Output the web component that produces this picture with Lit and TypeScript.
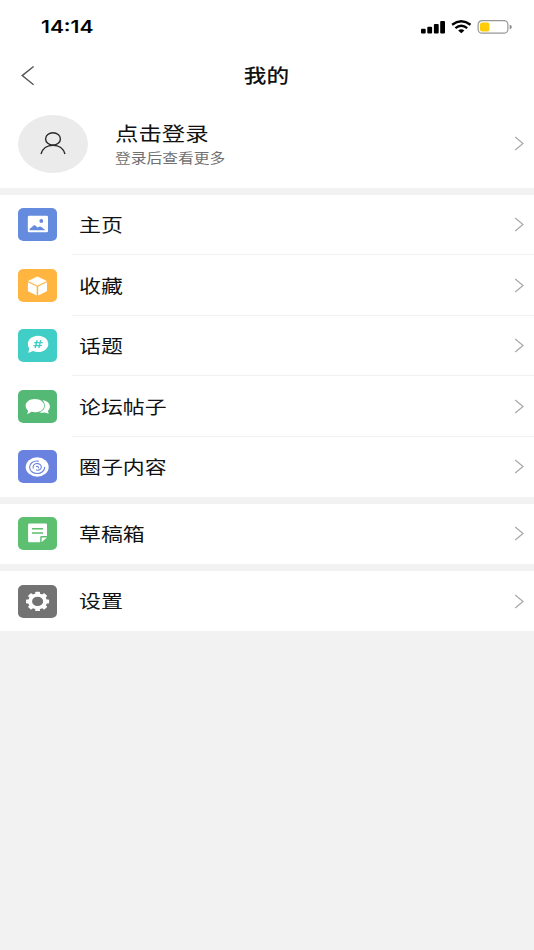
import { LitElement, html, svg, css, type SVGTemplateResult } from "lit";
import { customElement, property } from "lit/decorators.js";

const spokes = [0, 45, 90, 135, 180, 225, 270, 315];

const glyphs: Record<string, SVGTemplateResult> = {
  picture: svg`
    <rect x="9.8" y="7.7" width="20.2" height="16.5" rx="1.3" fill="#fff"/>
    <circle cx="23.3" cy="13" r="1.9" fill="#658bdf"/>
    <path d="M11.6 22.2V21L15.7 17.4Q16.4 16.8 17.2 17.5L19.7 19.5L21.6 18.5Q22.4 18.2 23.1 18.8L27.4 22.2Z" fill="#658bdf"/>`,
  cube: svg`
    <path d="M19.4 7.8L28.3 12L19.4 16.3L10.6 12Z" fill="#fff" stroke="#fff" stroke-width=".6" stroke-linejoin="round"/>
    <path d="M9.9 13.2L18.7 17.5V26.6L10.5 22.6Q9.9 22.3 9.9 21.6Z M29 13.2L20.2 17.5V26.6L28.4 22.6Q29 22.3 29 21.6Z" fill="#fff"/>`,
  topic: svg`
    <path d="M20.1 6.8C25.8 6.8 30.3 10.4 30.3 14.9S25.8 23 20.1 23C18.2 23 16.5 22.7 15 22C13.5 22.9 11.8 23.5 10 23.5C10.9 22.3 11.2 20.8 11 19.1C10.2 17.8 9.9 16.4 9.9 14.9C9.9 10.4 14.4 6.8 20.1 6.8Z" fill="#fff"/>
    <path d="M19.2 11.2L17.2 19M22.8 11.2L20.8 19M16.2 13.6H24.7M15.4 16.6H23.9" stroke="#40cec7" stroke-width="1.4" fill="none"/>`,
  comments: svg`
    <path d="M24.5 10.2C28.8 10.4 31.9 13 31.9 16.4C31.9 18.1 31.2 19.6 30 20.7Q30 22.5 31.1 23.6Q28.8 23.5 27 22.6C25.1 23 23 22.9 21.3 22.3C25 21.2 26.8 18.8 26.8 15.9C26.8 13.7 26 11.6 24.5 10.2Z" fill="#fff"/>
    <path d="M16.9 9.1C22.2 9.1 26.2 12 26.2 15.7S22.2 22.3 16.9 22.3C15.7 22.3 14.4 22.1 13.3 21.8Q11.2 23.6 8.9 24Q10.2 22.3 10 20.4C8.4 19.2 7.6 17.6 7.6 15.7C7.6 12 11.6 9.1 16.9 9.1Z" fill="#fff"/>`,
  spiral: svg`
    <ellipse cx="19.2" cy="17" rx="11.5" ry="9.7" fill="#fff"/>
    <path d="M20.3 11.1C15.4 10.5 11.5 13.3 11.6 17.2C11.7 21 15 23.5 19.2 23.5C23.4 23.5 26.5 20.9 26.7 17.4M15.2 18.2C14.5 15.2 16.9 13.2 19.9 13.6C22.8 14 24.1 16.4 22.9 18.5C22 20 20.2 20.5 18.6 19.9M18.4 16.5Q20.5 16 20.6 17.9" stroke="#6a82df" stroke-width="1.1" stroke-linecap="round" fill="none"/>`,
  note: svg`
    <path d="M11.4 6.4H27.7Q29 6.4 29 7.6V19H23.5Q22.2 19 22.2 20.2V25.3H11.4Q10.1 25.3 10.1 24.1V7.6Q10.1 6.4 11.4 6.4Z M23.6 20.4H29L23.6 25.2Z" fill="#fff"/>
    <path d="M14 11.7H25.1M14 16H25.1" stroke="#5dbf70" stroke-width="1.4"/>`,
  gear: svg`
    <g transform="translate(19.6 16.4) scale(1.19 1)">
      ${spokes.map((a) => svg`<rect x="-2" y="-9.7" width="4" height="4.5" rx=".7" fill="#fff" transform="rotate(${a})"/>`)}
      <circle r="6.3" fill="none" stroke="#fff" stroke-width="3.3"/>
    </g>`,
};

@customElement("menu-chevron")
class MenuChevron extends LitElement {
  static styles = css`
    :host { display: block; width: 10px; height: 15px; margin-right: 10px; flex: none; }
    svg { display: block; }
    path { fill: none; stroke: #a9a9a9; stroke-width: 1.25; }
  `;
  render() {
    return html`<svg width="10" height="15" viewBox="0 0 10 15"><path d="M1.2 1L9 7.5L1.2 14"/></svg>`;
  }
}

@customElement("menu-row")
class MenuRow extends LitElement {
  @property() icon = "";
  @property() label = "";
  @property() color = "";
  static styles = css`
    :host { display: flex; align-items: center; height: 60.5px; padding-left: 18px; background: #fff; box-sizing: border-box; }
    .tile { display: block; width: 39px; height: 33px; border-radius: 5.5px / 5px; flex: none; }
    .body { flex: 1; align-self: stretch; display: flex; align-items: center; justify-content: space-between; margin-left: 14.5px; padding-left: 7.5px; }
    :host([line]) .body { box-shadow: inset 0 -1px #f1f1f1; }
    .label { font-size: 18.2px; line-height: 28px; color: #111; white-space: nowrap; margin-bottom: 1.4px; transform: scaleX(1.205); transform-origin: left; }
  `;
  render() {
    return html`
      <svg class="tile" style="background:${this.color}" viewBox="0 0 39 33">${glyphs[this.icon]}</svg>
      <div class="body"><span class="label">${this.label}</span><menu-chevron></menu-chevron></div>`;
  }
}

const groups = [
  [
    ["picture", "主页", "#658bdf"],
    ["cube", "收藏", "#ffb540"],
    ["topic", "话题", "#40cec7"],
    ["comments", "论坛帖子", "#53b975"],
    ["spiral", "圈子内容", "#6a82df"],
  ],
  [["note", "草稿箱", "#5dbf70"]],
  [["gear", "设置", "#737373"]],
];

@customElement("app-root")
class AppRoot extends LitElement {
  static styles = css`
    :host { display: block; height: 950px; overflow: hidden; background: #f2f2f2; font-family: "Noto Sans CJK SC", sans-serif; color: #111; }
    .status { height: 54px; background: #fff; display: flex; justify-content: space-between; align-items: center; padding: 0 22px 0 40.5px; box-sizing: border-box; }
    .time { font: 600 17px/24px Inter, sans-serif; color: #000; transform: scaleX(1.235); transform-origin: left; }
    .signals { display: block; }
    .nav { height: 43px; background: #fff; display: grid; grid-template-columns: 44px 1fr 44px; align-items: center; }
    .back { margin-left: 20px; display: block; }
    .title { text-align: center; font-size: 19px; font-weight: 500; line-height: 28px; margin: 0 1px 2px 0; transform: scaleX(1.19); }
    .profile { height: 91px; background: #fff; display: flex; align-items: center; padding-left: 18px; }
    .avatar { width: 70px; height: 58px; border-radius: 50%; background: #ebebeb; display: flex; align-items: center; justify-content: center; margin-top: 3px; }
    .who { flex: 1; margin: 1px 0 0 27px; }
    .name { font-size: 19.6px; line-height: 28px; transform: scaleX(1.195); transform-origin: left; }
    .hint { font-size: 13.2px; line-height: 20px; margin-top: 1px; color: #707070; transform: scaleX(1.195); transform-origin: left; }
    .profile menu-chevron { margin-top: 2px; }
    .group { margin-top: 6.6px; }
  `;
  render() {
    return html`
      <header class="status">
        <span class="time">14:14</span>
        <svg class="signals" width="92" height="18" viewBox="0 0 92 18">
          <rect x="1" y="10.8" width="4.7" height="4.7" rx="1"/>
          <rect x="7.3" y="8.7" width="4.8" height="6.8" rx="1"/>
          <rect x="13.9" y="6" width="4.8" height="9.5" rx="1"/>
          <rect x="20.2" y="3" width="4.8" height="12.5" rx="1"/>
          <g fill="none" stroke="#000" stroke-width="2.4">
            <path d="M32.1 6.7Q41.3 0 50.5 6.7"/>
            <path d="M35.4 10.1Q41.3 5.6 47.2 10.1"/>
          </g>
          <path d="M38.2 12.5Q41.3 10.2 44.4 12.5L41.3 15.3Z"/>
          <rect x="58.1" y="2.6" width="29.8" height="12.6" rx="4" fill="#fff" stroke="#969696" stroke-width="1.2"/>
          <rect x="60" y="4.4" width="9.4" height="9" rx="2" fill="#ffcc0a"/>
          <path d="M89.7 6.8Q91.8 7.3 91.8 9T89.7 11.2Z" fill="#8b8b8b"/>
        </svg>
      </header>
      <nav class="nav">
        <svg class="back" width="16" height="22" viewBox="0 0 16 22"><path d="M13.6 1.5L2.2 10.6L13.6 19.8" fill="none" stroke="#555" stroke-width="1.4"/></svg>
        <div class="title">我的</div>
      </nav>
      <section class="profile">
        <div class="avatar">
          <svg width="28" height="24" viewBox="0 0 28 24" fill="none" stroke="#292929" stroke-width="1.4">
            <ellipse cx="14" cy="6.9" rx="7.4" ry="6.2"/>
            <path d="M2 22C3.4 16.7 8.1 13.2 14 13.2S24.6 16.7 26 22"/>
          </svg>
        </div>
        <div class="who"><div class="name">点击登录</div><div class="hint">登录后查看更多</div></div>
        <menu-chevron></menu-chevron>
      </section>
      ${groups.map((g) => html`<section class="group">${g.map(([icon, label, color], i) => html`
        <menu-row icon=${icon} label=${label} color=${color} ?line=${i < g.length - 1}></menu-row>`)}</section>`)}`;
  }
}
